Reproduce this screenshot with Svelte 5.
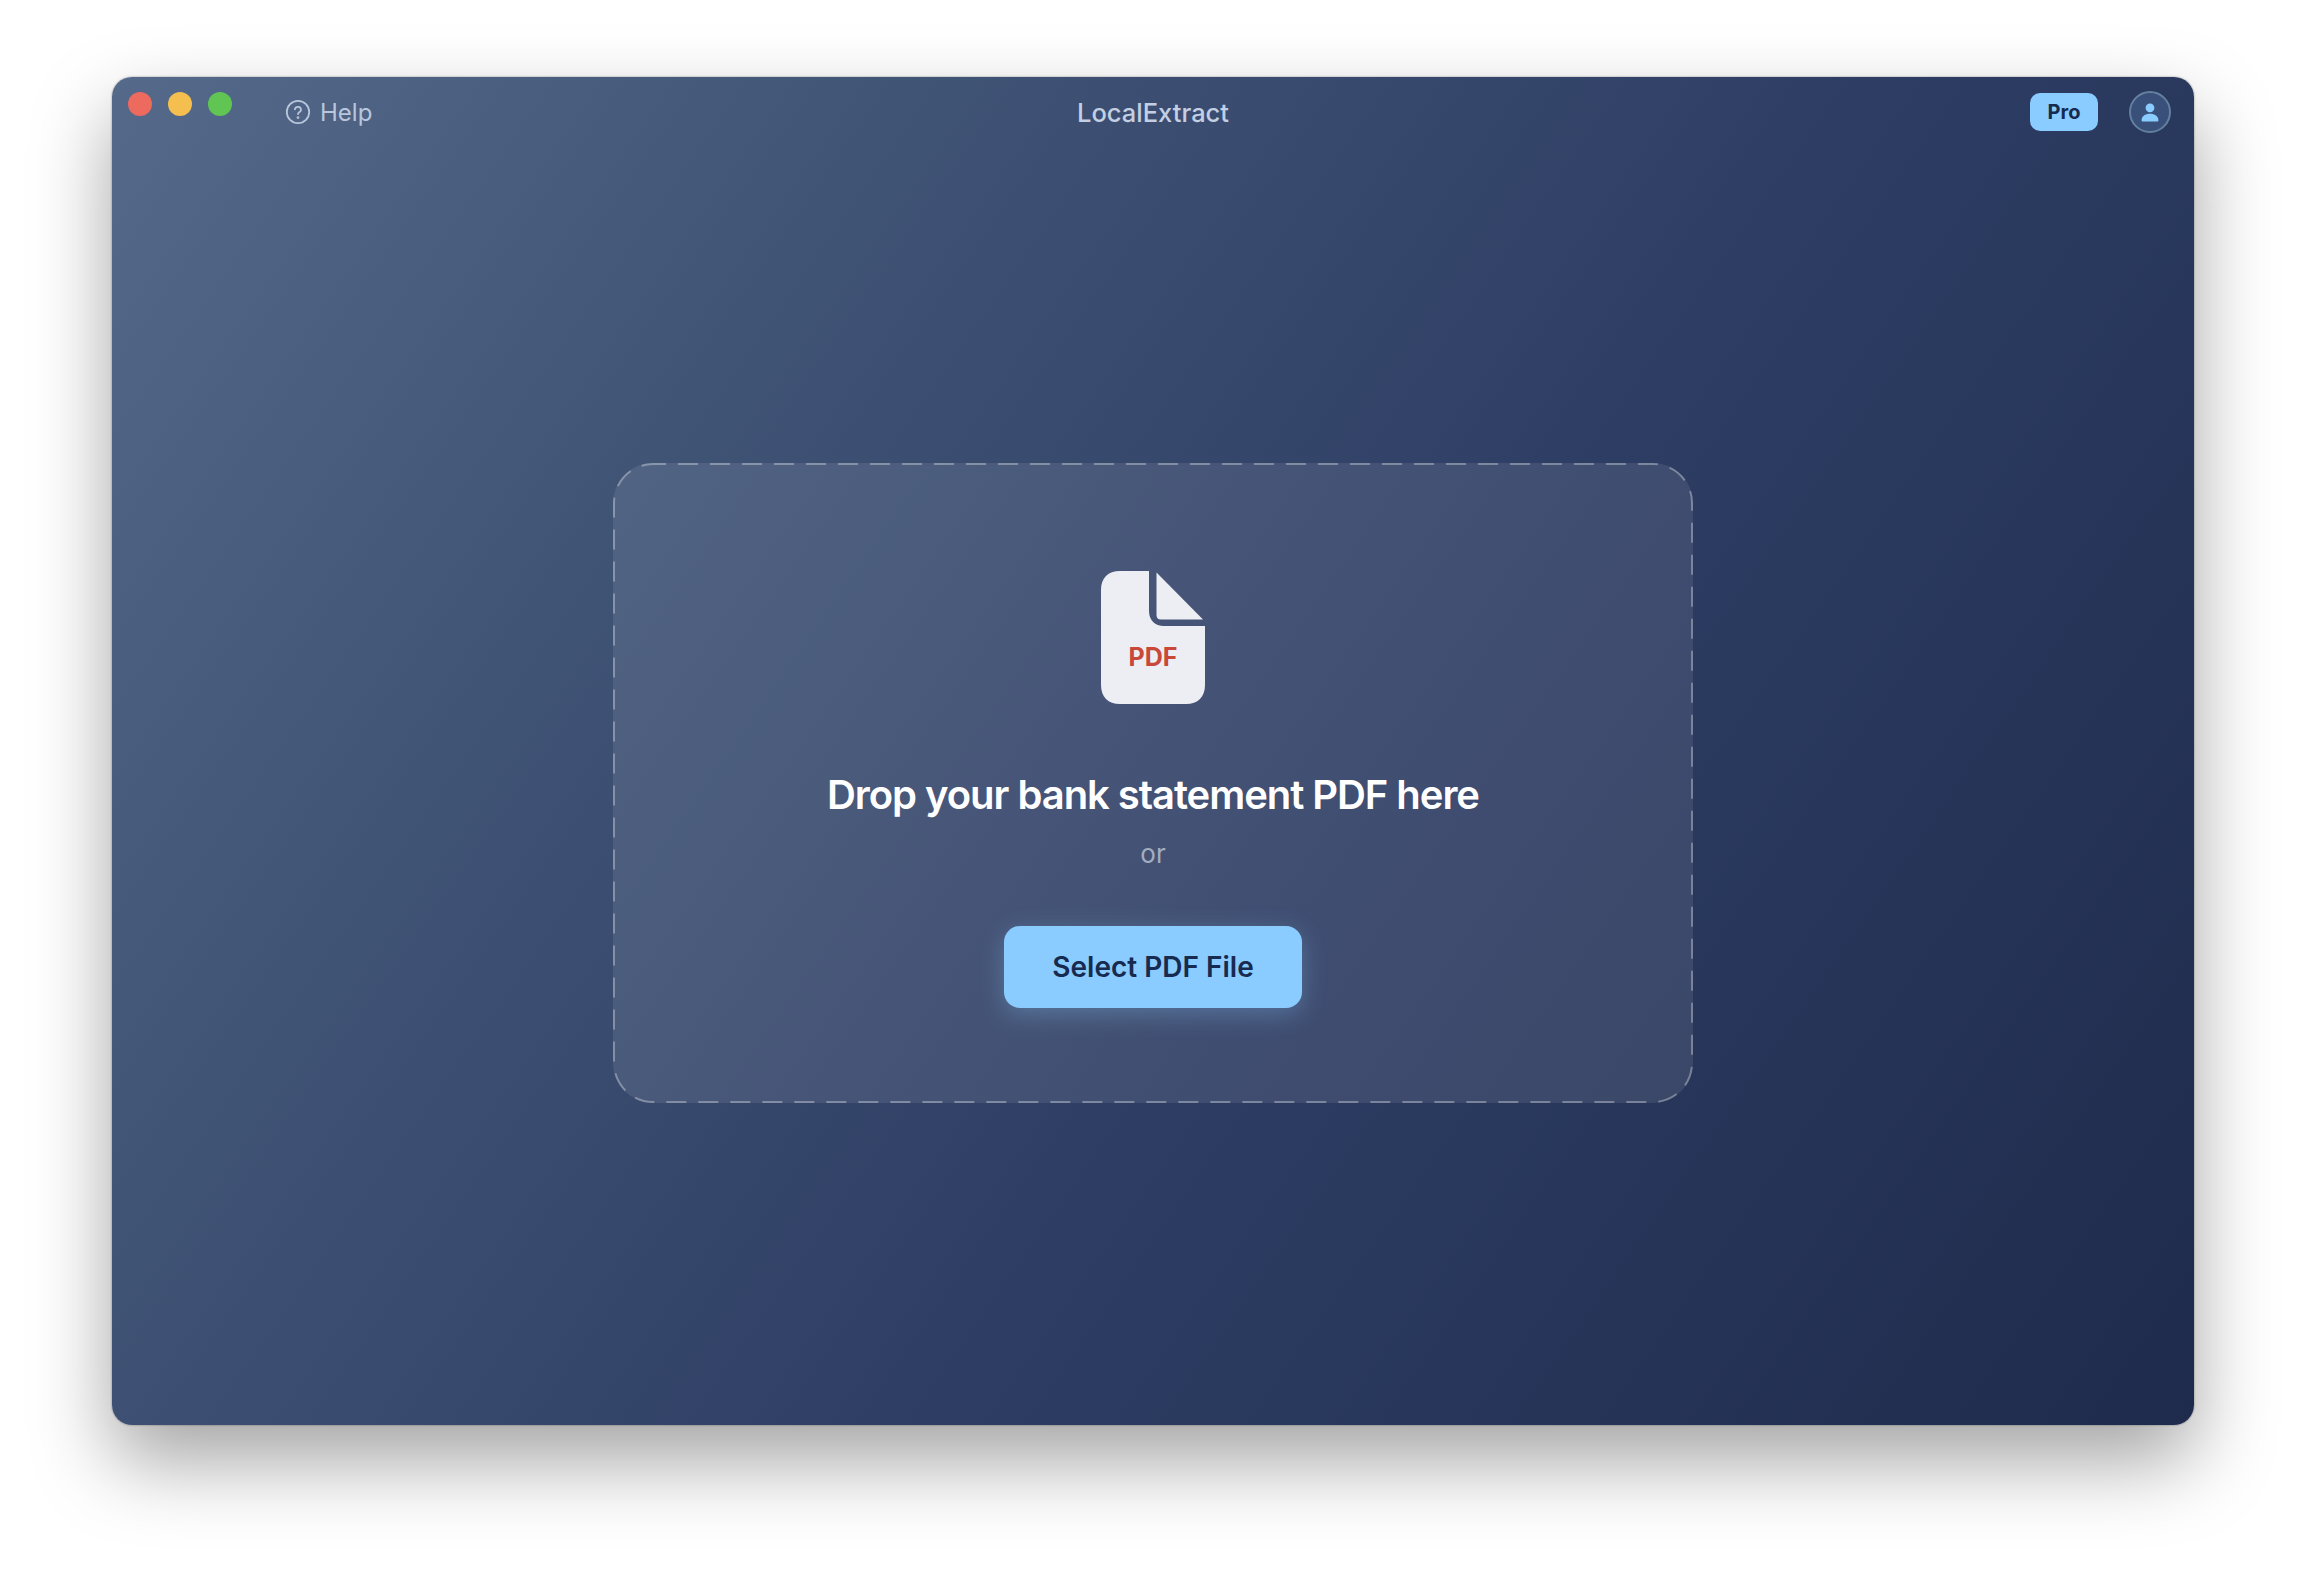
<script>
    const appName = "LocalExtract";
</script>

<div class="page">
    <div class="window">
        <header class="titlebar">
            <div class="left">
                <div class="lights">
                    <span class="light red"></span>
                    <span class="light yellow"></span>
                    <span class="light green"></span>
                </div>
                <button class="help">
                    <svg width="26" height="26" viewBox="0 0 26 26" fill="none" stroke="currentColor" stroke-width="1.8" stroke-linecap="round">
                        <circle cx="13" cy="13" r="11.2" />
                        <path d="M9.9 10.3a3.1 3.1 0 0 1 6.1.6c0 2-3 2.300-3 4.200" />
                        <circle cx="13" cy="18.6" r="0.5" fill="currentColor" />
                    </svg>
                    Help
                </button>
            </div>
            <div class="title">{appName}</div>
            <div class="right">
                <span class="pro">Pro</span>
                <span class="avatar">
                    <svg width="20" height="20" viewBox="0 0 20 20" fill="currentColor">
                        <circle cx="10" cy="5.8" r="4.4" />
                        <path d="M1.6 18.4c0-4.200 3.600-6.600 8.400-6.600s8.400 2.400 8.400 6.600c0 .7-.5 1.100-1.200 1.100H2.800c-.7 0-1.200-.4-1.200-1.100z" />
                    </svg>
                </span>
            </div>
        </header>

        <main class="main">
            <div class="dropzone">
                <svg class="dashes" width="1080" height="640" fill="none">
                    <rect x="1" y="1" width="1078" height="638" rx="39" stroke-dasharray="20 12" stroke-dashoffset="7" />
                </svg>
                <svg class="file" width="104" height="133" viewBox="0 0 104 133">
                    <path fill="#eceef3" d="M19 0H48V40c0 9 6 15 15 15H104V114c0 12-7 19-19 19H19C7 133 0 126 0 114V19C0 7 7 0 19 0z" />
                    <path fill="#eceef3" d="M55.500 1.500 102 48.500H60c-3 0-4.500-1.500-4.500-4.500z" />
                    <text x="52" y="95" text-anchor="middle">PDF</text>
                </svg>
                <h2>Drop your bank statement PDF here</h2>
                <p class="or">or</p>
                <button class="select">Select PDF File</button>
            </div>
        </main>
    </div>
</div>

<style>
    :global(body) {
        margin: 0;
        background: #fff;
    }

    .page {
        width: 2306px;
        height: 1574px;
        padding: 77px 112px 149px;
        box-sizing: border-box;
        overflow: hidden;
        font-family: Inter, "Liberation Sans", sans-serif;
    }

    .window {
        height: 100%;
        display: flex;
        flex-direction: column;
        border-radius: 20px;
        background: linear-gradient(125deg, #55698a 0%, #3f5375 28%, #2e3d64 58%, #1e2b4c 100%);
        box-shadow:
            0 0 2px rgba(0, 0, 0, 0.45),
            0 36px 80px rgba(0, 0, 0, 0.36);
    }

    .titlebar {
        height: 70px;
        flex: none;
        display: grid;
        grid-template-columns: 1fr auto 1fr;
        align-items: center;
        padding: 0 16px;
    }

    .left {
        display: flex;
        align-items: center;
    }

    .lights {
        display: flex;
        gap: 16px;
        margin-bottom: 16px;
    }

    .light {
        width: 24px;
        height: 24px;
        border-radius: 50%;
    }

    .red {
        background: #ec6a5e;
    }

    .yellow {
        background: #f4bf4f;
    }

    .green {
        background: #61c554;
    }

    .help {
        display: flex;
        align-items: center;
        gap: 9px;
        margin-left: 53px;
        padding: 0;
        background: none;
        border: none;
        color: #b9c6dc;
        font: 400 24px Inter, "Liberation Sans", sans-serif;
    }

    .title {
        color: #c3cfe3;
        font-size: 25.5px;
        font-weight: 500;
    }

    .right {
        display: flex;
        align-items: center;
        justify-content: flex-end;
        gap: 31px;
        padding-right: 7px;
    }

    .pro {
        width: 68px;
        height: 38px;
        display: flex;
        align-items: center;
        justify-content: center;
        border-radius: 10px;
        background: #8accff;
        color: #172a4f;
        font-size: 20px;
        font-weight: 700;
    }

    .avatar {
        width: 42px;
        height: 42px;
        box-sizing: border-box;
        display: flex;
        align-items: center;
        justify-content: center;
        border-radius: 50%;
        border: 2px solid #63809f;
        background: #38507a;
        color: #8accff;
    }

    .main {
        flex: 1;
        display: flex;
        align-items: center;
        justify-content: center;
        padding-bottom: 6px;
    }

    .dropzone {
        position: relative;
        width: 1080px;
        height: 640px;
        box-sizing: border-box;
        padding-top: 108px;
        display: flex;
        flex-direction: column;
        align-items: center;
        border-radius: 40px;
        background: rgba(255, 255, 255, 0.09);
    }

    .dashes {
        position: absolute;
        inset: 0;
    }

    .dashes rect {
        stroke: rgba(255, 255, 255, 0.32);
        stroke-width: 2;
    }

    .file text {
        fill: #c8483a;
        font-size: 25px;
        font-weight: 700;
    }

    h2 {
        margin: 62px 0 0;
        color: #fff;
        font-size: 40px;
        line-height: 58px;
        font-weight: 600;
        letter-spacing: -1.05px;
    }

    .or {
        margin: 14px 0 0;
        color: #a3adbf;
        font-size: 26px;
        line-height: 32px;
    }

    .select {
        width: 298px;
        height: 82px;
        margin-top: 56px;
        border: none;
        border-radius: 16px;
        background: #8accff;
        color: #172a4f;
        font: 600 28px Inter, "Liberation Sans", sans-serif;
        box-shadow: 0 6px 24px rgba(138, 204, 255, 0.3);
    }
</style>
